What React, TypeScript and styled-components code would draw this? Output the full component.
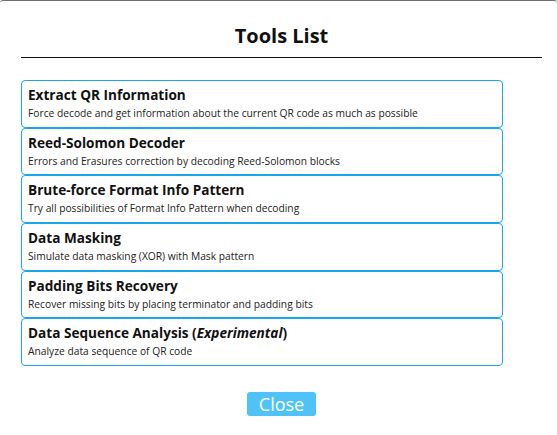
import React from "react";
import styled, { createGlobalStyle } from "styled-components";

const Global = createGlobalStyle`
  html, body { margin: 0; padding: 0; background: #fff; }
  body { font-family: "Open Sans", "Noto Sans", sans-serif; color: #111; }
`;

const Dialog = styled.div`
  box-sizing: border-box;
  width: 557px;
  height: 435px;
  border-top: 1px solid #6f6f6f;
  border-radius: 3px 3px 0 0;
  padding: 0 15px 0 21px;
  display: flex;
  flex-direction: column;
`;

const Header = styled.h2`
  margin: 0;
  height: 57px;
  box-sizing: border-box;
  padding-top: 20px;
  font-size: 20px;
  line-height: 30px;
  font-weight: 700;
  text-align: center;
  border-bottom: 1px solid #111;
  color: #111;
`;

const List = styled.div`
  margin-top: 22px;
  width: 482px;
  display: flex;
  flex-direction: column;
`;

const Item = styled.div`
  box-sizing: border-box;
  height: 47.67px;
  border: 1px solid #1aa6ea;
  border-radius: 4px;
  padding: 4px 7px 0 6px;
  background: #fff;
`;

const ItemTitle = styled.div`
  font-size: 13.6px;
  line-height: 20px;
  font-weight: 700;
  color: #111;
`;

const ItemDesc = styled.div`
  font-size: 10.25px;
  line-height: 16px;
  color: #222;
`;

const Footer = styled.div`
  display: flex;
  justify-content: center;
  margin-top: 26px;
`;

const CloseButton = styled.button`
  width: 69px;
  height: 24px;
  border: none;
  border-radius: 3px;
  background: #4fc3f7;
  color: #fff;
  font-family: "Open Sans", "Noto Sans", sans-serif;
  font-size: 18px;
  line-height: 24px;
  padding: 0;
`;

const tools: { title: React.ReactNode; desc: string }[] = [
  { title: "Extract QR Information", desc: "Force decode and get information about the current QR code as much as possible" },
  { title: "Reed-Solomon Decoder", desc: "Errors and Erasures correction by decoding Reed-Solomon blocks" },
  { title: "Brute-force Format Info Pattern", desc: "Try all possibilities of Format Info Pattern when decoding" },
  { title: "Data Masking", desc: "Simulate data masking (XOR) with Mask pattern" },
  { title: "Padding Bits Recovery", desc: "Recover missing bits by placing terminator and padding bits" },
  {
    title: (
      <>
        Data Sequence Analysis (<i>Experimental</i>)
      </>
    ),
    desc: "Analyze data sequence of QR code",
  },
];

export default function App() {
  return (
    <>
      <Global />
      <Dialog>
        <Header>Tools List</Header>
        <List>
          {tools.map((t, i) => (
            <Item key={i}>
              <ItemTitle>{t.title}</ItemTitle>
              <ItemDesc>{t.desc}</ItemDesc>
            </Item>
          ))}
        </List>
        <Footer>
          <CloseButton>Close</CloseButton>
        </Footer>
      </Dialog>
    </>
  );
}
